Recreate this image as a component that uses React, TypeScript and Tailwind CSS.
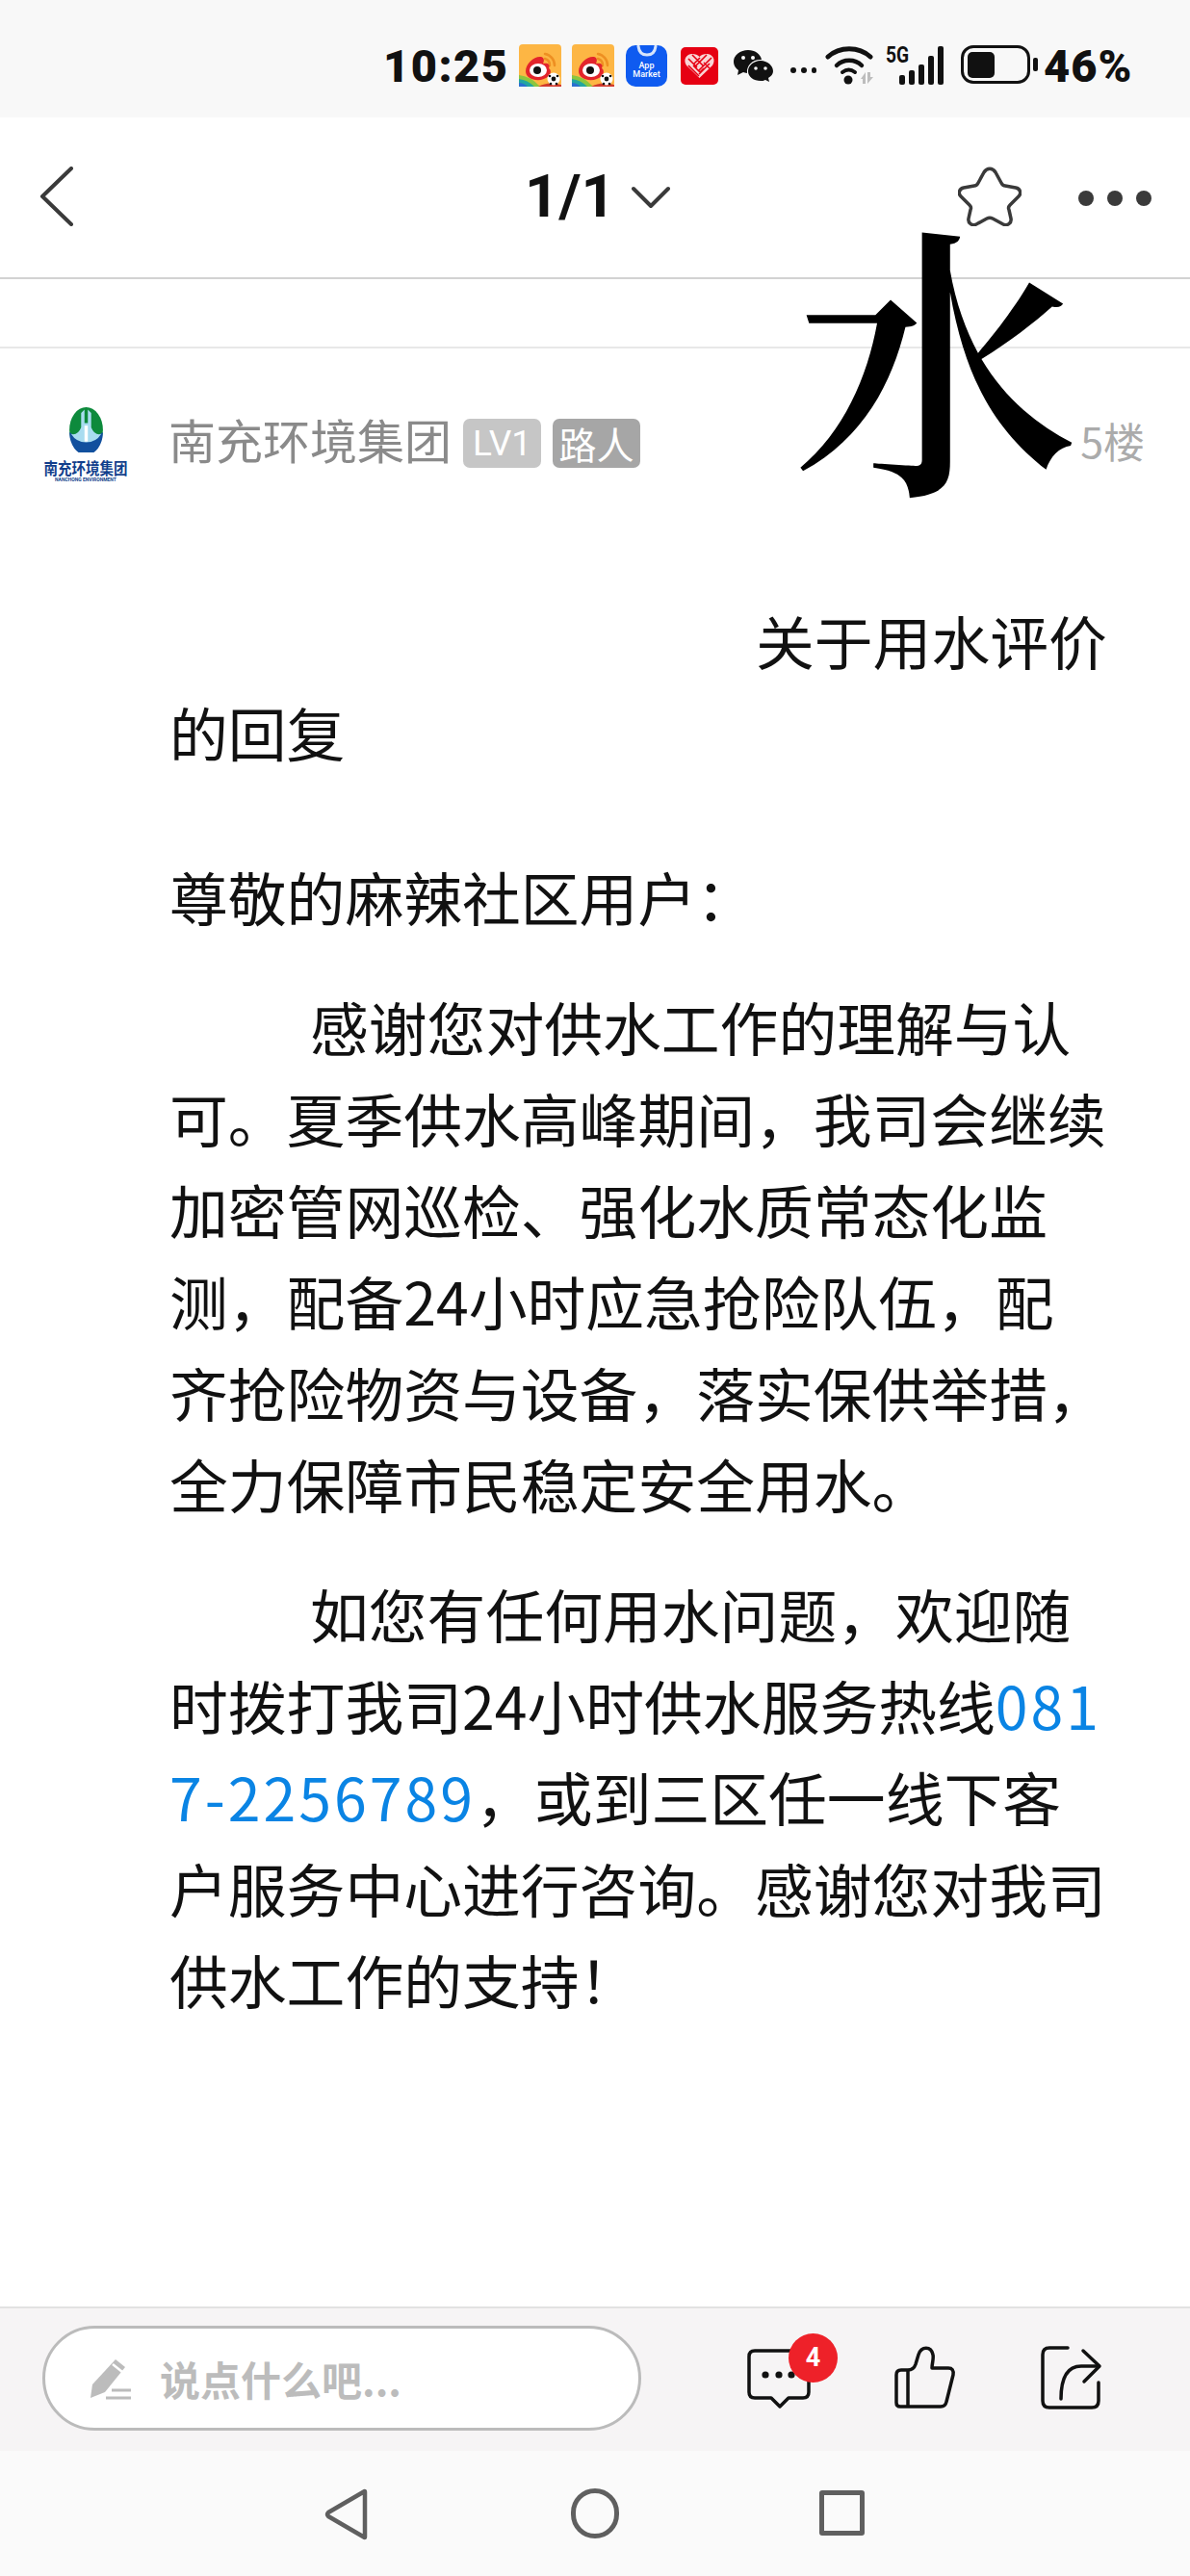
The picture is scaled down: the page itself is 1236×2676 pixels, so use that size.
import React from 'react';

const cjk = 'font-["Noto_Sans_CJK_SC","Noto_Sans",sans-serif]';

// full-width punctuation, kept as escapes so it can't get normalised to ascii
const C = '\uFF0C';
const COLON = '\uFF1A';
const BANG = '\uFF01';

const WeiboIcon = () => (
  <svg width="44" height="44" viewBox="0 0 44 44">
    <rect width="44" height="44" rx="4" fill="#fdb644" />
    <path d="M0 32 Q12 33 22 44 H0 Z" fill="#8cc63f" />
    <path d="M0 36 Q9 37 16 44 H0 Z" fill="#23a6a0" />
    <path d="M0 40 Q5 40 9 44 H0 Z" fill="#2a6fd0" />
    <path d="M20 44 Q30 38 44 42 V44 Z" fill="#d23b2e" />
    <path d="M27 10 A12 12 0 0 1 37 22 M27 15 A7 7 0 0 1 32 22" fill="none" stroke="#ee8f22" strokeWidth="2.5" strokeLinecap="round" />
    <path d="M7 28 C7 20 16 12 23 13 C27 14 26 18 25 20 C30 19 33 21 31 25 C34 27 33 31 31 33 C24 40 7 38 7 28 Z" fill="#e3242b" />
    <ellipse cx="20" cy="27" rx="9" ry="7" fill="#fff" />
    <circle cx="19" cy="27" r="4" fill="#111" />
    <circle cx="36" cy="36" r="6.5" fill="#fff" />
    <circle cx="36" cy="36" r="2.4" fill="#111" />
    <circle cx="32" cy="33" r="1.3" fill="#111" />
    <circle cx="40" cy="33" r="1.3" fill="#111" />
    <circle cx="33" cy="41" r="1.3" fill="#111" />
    <circle cx="39" cy="41" r="1.3" fill="#111" />
  </svg>
);

const MarketIcon = () => (
  <div className="w-[43px] h-[43px] rounded-[10px] bg-[#0f5bf0] flex flex-col items-center text-white font-['Roboto',sans-serif] font-medium text-[9px] leading-[9px]">
    <svg width="26" height="14" viewBox="0 0 26 14" className="mb-[3px]">
      <path d="M4 1 Q5 10 13 10 Q21 10 22 1" fill="none" stroke="#d6e4fb" strokeWidth="3" strokeLinecap="round" />
    </svg>
    <span>App</span>
    <span>Market</span>
  </div>
);

const PddIcon = () => (
  <svg width="39" height="39" viewBox="0 0 39 39">
    <rect width="39" height="39" rx="5" fill="#e60012" />
    <path d="M19.5 32 L6 19 C2 13 6 7 12 7 C15 7 18 8 19.5 10 C21 8 24 7 27 7 C33 7 37 13 33 19 Z" fill="#f9d5d5" />
    <path d="M8 12 L17 21 M12 8 L23 19 M20 11 L14 17 M27 8 L16 19 M32 11 L19 24 M8 19 L19 30 M13 19 L21 27 M24 16 L30 22 M30 17 L19 28 M24 22 L20 26" stroke="#e60012" strokeWidth="1.6" fill="none" />
  </svg>
);

const WechatIcon = () => (
  <svg width="41" height="33" viewBox="0 0 41 33">
    <path d="M15 0 C7 0 0 5 0 12 C0 16 2 19 5 21 L4 26 L10 23 C11 23 12 24 14 24 C13 15 21 9 29 10 C28 4 22 0 15 0 Z" fill="#111" />
    <circle cx="10" cy="8" r="2" fill="#f8f8f8" />
    <circle cx="20" cy="8" r="2" fill="#f8f8f8" />
    <path d="M28 11 C21 11 15 16 15 22 C15 28 21 32 28 32 C30 32 31 32 33 31 L37 33 L36 29 C39 27 41 25 41 22 C41 16 35 11 28 11 Z" fill="#111" />
    <circle cx="23" cy="19" r="1.8" fill="#f8f8f8" />
    <circle cx="33" cy="19" r="1.8" fill="#f8f8f8" />
  </svg>
);

const WifiIcon = () => (
  <svg width="50" height="40" viewBox="0 0 50 40">
    <path d="M3 11 C15 0 35 0 47 11" fill="none" stroke="#111" strokeWidth="5" strokeLinecap="round" />
    <path d="M12 20 C19 13 31 13 38 20" fill="none" stroke="#111" strokeWidth="4.5" strokeLinecap="round" />
    <path d="M18 27 C22 24 27 24 31 27" fill="none" stroke="#111" strokeWidth="4" strokeLinecap="round" />
    <circle cx="24" cy="35" r="4.5" fill="#111" />
    <path d="M37 34 L42 27 V39 H39 V34 Z M44 27 H47 V32 H50 L44 39 Z" fill="#bdbdbd" />
  </svg>
);

const SignalIcon = () => (
  <div className="relative w-[60px] h-[40px]">
    <span className="absolute left-0 top-[-3px] font-['Roboto',sans-serif] font-bold text-[24px] leading-[24px] text-[#111] scale-x-[0.8] origin-left">5G</span>
    <div className="absolute inset-0 flex items-end justify-end gap-[4px]">
      <span className="w-[6px] h-[10px] bg-[#111] rounded-[2px]" />
      <span className="w-[6px] h-[15px] bg-[#111] rounded-[2px]" />
      <span className="w-[6px] h-[21px] bg-[#111] rounded-[2px]" />
      <span className="w-[6px] h-[30px] bg-[#111] rounded-[2px]" />
      <span className="w-[6px] h-[40px] bg-[#111] rounded-[2px]" />
    </div>
  </div>
);

const BatteryIcon = () => (
  <div className="flex items-center">
    <div className="w-[72px] h-[40px] rounded-[13px] border-[3.5px] border-[#111] p-[3.5px]">
      <div className="w-[28px] h-full rounded-[5px] bg-[#111]" />
    </div>
    <span className="w-[5px] h-[14px] ml-[3px] rounded-[2px] bg-[#111]" />
  </div>
);

const StatusBar = () => (
  <div className="h-[122px] bg-[#f8f8f8] flex items-start pl-[398px] pt-[46px] shrink-0">
    <span className="w-[127px] font-['Roboto',sans-serif] font-black text-[47px] leading-[46px] tracking-[1.5px] text-[#111] whitespace-nowrap mr-[14px]">10:25</span>
    <div className="mr-[11px]"><WeiboIcon /></div>
    <div className="mr-[12px]"><WeiboIcon /></div>
    <div className="mr-[14px] mt-[1px]"><MarketIcon /></div>
    <div className="mr-[16px] mt-[3px]"><PddIcon /></div>
    <div className="mr-[18px] mt-[6px]"><WechatIcon /></div>
    <div className="flex gap-[5px] w-[28px] mt-[24px] mr-[8px]">
      <span className="w-[6px] h-[6px] rounded-full bg-[#111]" />
      <span className="w-[6px] h-[6px] rounded-full bg-[#111]" />
      <span className="w-[5px] h-[6px] rounded-full bg-[#111]" />
    </div>
    <div className="mr-[13px] mt-[2px]"><WifiIcon /></div>
    <div className="mr-[18px] mt-[2px]"><SignalIcon /></div>
    <div className="mr-[6px] mt-[1px]"><BatteryIcon /></div>
    <span className="font-['Roboto',sans-serif] font-black text-[47px] leading-[46px] tracking-[1px] text-[#111] whitespace-nowrap">46%</span>
  </div>
);

const Header = () => (
  <div className="h-[168px] bg-white border-b-2 border-[#d2d2d2] flex items-start pt-[51px] shrink-0">
    <svg width="36" height="62" viewBox="0 0 36 62" className="ml-[41px] mr-[468px] shrink-0">
      <path d="M33 2 L3 31 L33 60" fill="none" stroke="#3a3a3a" strokeWidth="4" strokeLinecap="round" strokeLinejoin="round" />
    </svg>
    <span className="w-[111px] font-['Roboto',sans-serif] font-bold text-[62px] leading-[62px] text-[#111]">1/1</span>
    <svg width="40" height="24" viewBox="0 0 40 24" className="mt-[20px] shrink-0">
      <path d="M2 3 L20 21 L38 3" fill="none" stroke="#3a3a3a" strokeWidth="4" strokeLinecap="round" strokeLinejoin="round" />
    </svg>
    <svg width="66" height="62" viewBox="0 0 66 62" className="ml-[299px] shrink-0">
      <path d="M27 6 C30 1 36 1 39 6 L45 17 C46 19 47 20 49 20 L60 22 C65 23 66 28 63 31 L54 40 C53 41 52 43 53 45 L55 54 C56 59 51 62 47 60 L36 54 C34 53 32 53 30 54 L19 60 C15 62 10 59 11 54 L13 45 C14 43 13 41 12 40 L3 31 C0 28 1 23 6 22 L17 20 C19 20 20 19 21 17 Z" fill="none" stroke="#3a3a3a" strokeWidth="3.5" strokeLinejoin="round" />
    </svg>
    <div className="ml-[59px] mt-[25px] flex gap-[14px]">
      <span className="w-[16px] h-[16px] rounded-full bg-[#3a3a3a]" />
      <span className="w-[16px] h-[16px] rounded-full bg-[#3a3a3a]" />
      <span className="w-[16px] h-[16px] rounded-full bg-[#3a3a3a]" />
    </div>
  </div>
);

const Logo = () => (
  <div className="w-[86px] flex flex-col items-center">
    <svg width="35" height="47" viewBox="0 0 40 54">
      <ellipse cx="20" cy="27" rx="20" ry="27" fill="#0d8a3c" />
      <path d="M0 30 A20 27 0 0 0 40 30 Q30 38 20 38 Q10 38 0 30 Z" fill="#12509e" />
      <path d="M2 32 Q10 34 14 24 V7 L18 3 V19 H22 V3 L26 7 V24 Q30 34 38 32 Q32 42 20 42 Q8 42 2 32 Z" fill="#a8dcf0" />
      <path d="M18 22 H22 V41 H18 Z" fill="#fff" />
    </svg>
    <span className={`${cjk} font-bold text-[14.5px] leading-[18px] text-[#123f8c] whitespace-nowrap mt-[7px] scale-y-[1.15]`}>南充环境集团</span>
    <span className="font-['Roboto',sans-serif] font-bold text-[5px] leading-[6px] text-[#123f8c] whitespace-nowrap">NANCHONG ENVIRONMENT</span>
  </div>
);

const UserRow = () => (
  <div className="h-[200px] pl-[46px] pr-[47px] flex items-center shrink-0">
    <Logo />
    <span className={`${cjk} ml-[43px] mb-[13px] text-[49px] leading-[60px] text-[#8a8a8a] whitespace-nowrap`}>南充环境集团</span>
    <span className="ml-[12px] mb-[3px] w-[81px] h-[51px] rounded-[7px] bg-[#c6c6c6] text-white flex items-center justify-center font-['Roboto',sans-serif] text-[37px]">LV1</span>
    <span className={`${cjk} ml-[12px] mb-[3px] w-[91px] h-[51px] rounded-[7px] bg-[#a6a6a6] text-white flex items-center justify-center text-[39px]`}>路人</span>
    <span className={`${cjk} ml-auto mb-[11px] text-[43px] leading-[50px] text-[#ababab]`}>5楼</span>
  </div>
);

const Article = () => (
  <div className={`${cjk} flex-1 pl-[176px] pr-[84px] pt-[55px] text-[60.8px] leading-[95px] text-[#111] [word-break:break-all]`}>
    <p className="indent-[609px]">关于用水评价的回复</p>
    <p className="mt-[76px]">{`尊敬的麻辣社区用户${COLON}`}</p>
    <p className="mt-[40px] indent-[146px]">
      {`感谢您对供水工作的理解与认可。夏季供水高峰期间${C}我司会继续加密管网巡检、强化水质常态化监测${C}配备24小时应急抢险队伍${C}配齐抢险物资与设备${C}落实保供举措${C}全力保障市民稳定安全用水。`}
    </p>
    <p className="mt-[40px] indent-[146px]">
      {`如您有任何用水问题${C}欢迎随时拨打我司24小时供水服务热线`}
      <span className="text-[#0a84e4] tracking-[3px]">0817-2256789</span>
      {`${C}或到三区任一线下客户服务中心进行咨询。感谢您对我司供水工作的支持${BANG}`}
    </p>
  </div>
);

const Toolbar = () => (
  <div className="h-[150px] bg-[#f6f4f5] border-t-2 border-[#e2e2e2] flex items-start pt-[18px] shrink-0">
    <div className="ml-[44px] w-[622px] h-[109px] rounded-full border-[3px] border-[#bbbbbb] bg-white flex items-center pl-[45px] shrink-0">
      <svg width="44" height="44" viewBox="0 0 44 44">
        <path d="M28 2 L38 10 L17 36 L2 42 L4 28 Z" fill="#bcbcbc" />
        <path d="M25 7 L35 15" stroke="#fff" strokeWidth="2.5" />
        <path d="M24 34 H44 M18 42 H44" stroke="#bcbcbc" strokeWidth="3" />
      </svg>
      <span className={`${cjk} ml-[30px] font-bold text-[42px] leading-[50px] text-[#bcbcbc]`}>说点什么吧...</span>
    </div>
    <div className="relative ml-[110px] mt-[24px] shrink-0">
      <svg width="66" height="62" viewBox="0 0 66 62" className="block">
        <path d="M8 2 H58 Q64 2 64 8 V45 Q64 51 58 51 H43 L34 60 L25 51 H8 Q2 51 2 45 V8 Q2 2 8 2 Z" fill="none" stroke="#111" strokeWidth="3.5" strokeLinejoin="round" />
        <circle cx="19" cy="27" r="3.6" fill="#111" />
        <circle cx="33" cy="27" r="3.6" fill="#111" />
        <circle cx="46" cy="27" r="3.6" fill="#111" />
      </svg>
      <span className="absolute left-[43px] top-[-16px] w-[51px] h-[51px] rounded-full bg-[#ee2129] text-white flex items-center justify-center font-['Roboto',sans-serif] font-bold text-[27px]">4</span>
    </div>
    <svg width="64" height="66" viewBox="0 0 64 66" className="ml-[87px] mt-[21px] shrink-0">
      <path d="M2 30 Q2 25 7 25 H14 Q20 25 22 19 L25 9 C28 0 38 0 40 9 C41 13 39 18 39 23 H56 Q62 23 61 30 L54 58 Q53 63 48 63 H6 Q2 63 2 59 Z M14 25 V63" fill="none" stroke="#111" strokeWidth="3.5" strokeLinejoin="round" />
    </svg>
    <svg width="64" height="66" viewBox="0 0 64 66" className="ml-[88px] mt-[21px] shrink-0">
      <path d="M28 2 H9 Q2 2 2 9 V57 Q2 64 9 64 H53 Q60 64 60 57 V38" fill="none" stroke="#111" strokeWidth="3.5" strokeLinecap="round" />
      <path d="M44 5 L61 21 L45 37" fill="none" stroke="#111" strokeWidth="3.5" strokeLinecap="round" strokeLinejoin="round" />
      <path d="M60 21 H42 C30 21 21 30 21 55" fill="none" stroke="#111" strokeWidth="3.5" strokeLinecap="round" />
    </svg>
  </div>
);

const NavBar = () => (
  <div className="h-[130px] bg-[#fafafa] flex items-start pt-[39px] shrink-0">
    <svg width="46" height="54" viewBox="0 0 46 54" className="ml-[337px]">
      <path d="M42 4 V50 Q42 52 40 50 L4 29 Q2 27 4 25 L40 4 Q42 2 42 4 Z" fill="none" stroke="#5f5f5f" strokeWidth="4.5" strokeLinejoin="round" />
    </svg>
    <div className="ml-[210px] w-[50px] h-[52px] rounded-full border-[5px] border-[#5f5f5f]" />
    <div className="ml-[208px] mt-[2px] w-[47px] h-[47px] rounded-[3px] border-[5px] border-[#5f5f5f]" />
  </div>
);

export default function App() {
  return (
    <div className="relative w-[1236px] h-[2676px] overflow-hidden bg-white flex flex-col">
      <StatusBar />
      <Header />
      <div className="h-[72px] border-b-2 border-[#e8e8e8] shrink-0" />
      <UserRow />
      <Article />
      <Toolbar />
      <NavBar />
      {/* huge glyph that sits over the post header */}
      <span className="absolute left-[824px] top-[189px] font-['Noto_Serif_CJK_SC','Noto_Sans_CJK_SC',serif] font-semibold text-[297px] leading-[350px] text-black">水</span>
    </div>
  );
}
